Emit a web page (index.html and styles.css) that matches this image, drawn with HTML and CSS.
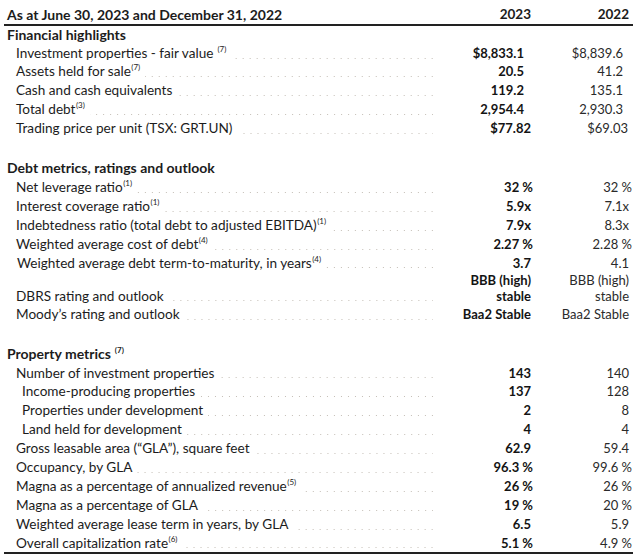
FILE: index.html
```html
<!DOCTYPE html>
<html lang="en">
<head>
<meta charset="utf-8">
<title>Highlights</title>
<link rel="stylesheet" href="styles.css">
</head>
<body>
<div class="table">
  <div class="row head">
    <div class="label"><span class="text">As at June 30, 2023 and December 31, 2022</span></div>
    <div class="val">2023</div>
    <div class="val">2022</div>
  </div>

  <div class="row section first"><div class="label"><span class="text">Financial highlights</span></div></div>
  <div class="row"><div class="label"><span class="text">Investment properties - fair value <sup>(7)</sup></span><span class="lead"></span></div><div class="val cur p7">$8,833.1</div><div class="val prev p6">$8,839.6</div></div>
  <div class="row"><div class="label"><span class="text">Assets held for sale<sup>(7)</sup></span><span class="lead"></span></div><div class="val cur p7">20.5</div><div class="val prev p6">41.2</div></div>
  <div class="row"><div class="label"><span class="text">Cash and cash equivalents</span><span class="lead"></span></div><div class="val cur p7">119.2</div><div class="val prev p6">135.1</div></div>
  <div class="row"><div class="label"><span class="text">Total debt<sup>(3)</sup></span><span class="lead"></span></div><div class="val cur p7">2,954.4</div><div class="val prev p6">2,930.3</div></div>
  <div class="row"><div class="label"><span class="text">Trading price per unit (TSX: GRT.UN)</span><span class="lead"></span></div><div class="val cur">$77.82</div><div class="val prev p1">$69.03</div></div>

  <div class="spacer"></div>

  <div class="row section"><div class="label"><span class="text">Debt metrics, ratings and outlook</span></div></div>
  <div class="row"><div class="label"><span class="text">Net leverage ratio<sup>(1)</sup></span><span class="lead"></span></div><div class="val cur pct">32 %</div><div class="val prev pct">32 %</div></div>
  <div class="row"><div class="label"><span class="text">Interest coverage ratio<sup>(1)</sup></span><span class="lead"></span></div><div class="val cur">5.9x</div><div class="val prev">7.1x</div></div>
  <div class="row"><div class="label"><span class="text">Indebtedness ratio (total debt to adjusted EBITDA)<sup>(1)</sup></span><span class="lead"></span></div><div class="val cur">7.9x</div><div class="val prev">8.3x</div></div>
  <div class="row"><div class="label"><span class="text">Weighted average cost of debt<sup>(4)</sup></span><span class="lead"></span></div><div class="val cur pct">2.27 %</div><div class="val prev pct">2.28 %</div></div>
  <div class="row"><div class="label"><span class="text shift">Weighted average debt term-to-maturity, in years<sup>(4)</sup></span><span class="lead"></span></div><div class="val cur">3.7</div><div class="val prev">4.1</div></div>
  <div class="row tall"><div class="label"><span class="text">DBRS rating and outlook</span><span class="lead"></span></div><div class="val cur two"><span class="ln">BBB (high)</span><span class="ln">stable</span></div><div class="val prev two"><span class="ln">BBB (high)</span><span class="ln">stable</span></div></div>
  <div class="row"><div class="label"><span class="text">Moody’s rating and outlook</span><span class="lead"></span></div><div class="val cur">Baa2 Stable</div><div class="val prev">Baa2 Stable</div></div>

  <div class="spacer short"></div>

  <div class="row section"><div class="label"><span class="text">Property metrics <sup>(7)</sup></span></div></div>
  <div class="row"><div class="label"><span class="text">Number of investment properties</span><span class="lead"></span></div><div class="val cur">143</div><div class="val prev">140</div></div>
  <div class="row"><div class="label sub"><span class="text">Income-producing properties</span><span class="lead"></span></div><div class="val cur">137</div><div class="val prev">128</div></div>
  <div class="row"><div class="label sub"><span class="text">Properties under development</span><span class="lead"></span></div><div class="val cur">2</div><div class="val prev">8</div></div>
  <div class="row"><div class="label sub"><span class="text">Land held for development</span><span class="lead"></span></div><div class="val cur">4</div><div class="val prev">4</div></div>
  <div class="row"><div class="label"><span class="text">Gross leasable area (“GLA”), square feet</span><span class="lead"></span></div><div class="val cur">62.9</div><div class="val prev">59.4</div></div>
  <div class="row"><div class="label"><span class="text">Occupancy, by GLA</span><span class="lead"></span></div><div class="val cur pct">96.3 %</div><div class="val prev pct">99.6 %</div></div>
  <div class="row"><div class="label"><span class="text">Magna as a percentage of annualized revenue<sup>(5)</sup></span><span class="lead"></span></div><div class="val cur pct">26 %</div><div class="val prev pct">26 %</div></div>
  <div class="row"><div class="label"><span class="text">Magna as a percentage of GLA</span><span class="lead"></span></div><div class="val cur pct">19 %</div><div class="val prev pct">20 %</div></div>
  <div class="row"><div class="label"><span class="text">Weighted average lease term in years, by GLA</span><span class="lead"></span></div><div class="val cur">6.5</div><div class="val prev">5.9</div></div>
  <div class="row last"><div class="label"><span class="text">Overall capitalization rate<sup>(6)</sup></span><span class="lead"></span></div><div class="val cur pct">5.1 %</div><div class="val prev pct">4.9 %</div></div>
</div>
</body>
</html>
```

FILE: styles.css
```css
html, body {
  margin: 0;
  padding: 0;
  background: #ffffff;
}

body {
  font-family: Lato, "Noto Sans", sans-serif;
  font-size: 13.6px;
  color: #1c1c1c;
}

.table {
  margin-left: 4px;
  padding-top: 5px;
  padding-right: 4px;
  box-sizing: border-box;
  width: 629px;
}

.row {
  display: grid;
  grid-template-columns: 429px 98px 98px;
  height: 18.9px;
  line-height: 18.9px;
}

.row.head {
  height: 19px;
  line-height: 19px;
  font-weight: 700;
  font-size: 14px;
  border-bottom: 2px solid #222;
  width: 629px;
  grid-template-columns: 429px 98px 98px 4px;
}

.row.head .val {
  font-size: 13.5px;
}

.row.section {
  font-weight: 700;
  font-size: 14px;
}

.row.section.first {
  height: 17.6px;
  line-height: 17.6px;
}

.row.last {
  border-bottom: 2px solid #222;
  width: 629px;
  grid-template-columns: 429px 98px 98px 4px;
}

.label {
  display: flex;
  padding-left: 12px;
  min-width: 0;
}

.row.head .label,
.row.section .label {
  padding-left: 3px;
}

.label.sub {
  padding-left: 18px;
}

.text {
  white-space: nowrap;
}

.text.shift {
  margin-left: 1px;
}

.lead {
  flex: 1;
  margin-left: 5px;
  background-image: linear-gradient(to right, #c4beb6 1px, transparent 1px);
  background-size: 7px 1px;
  background-repeat: repeat-x;
  background-position: right 1px bottom 4px;
}

sup {
  font-size: 8px;
  line-height: 0;
  vertical-align: 0;
  position: relative;
  top: -6px;
  margin-left: 0.5px;
}

.val {
  text-align: right;
  white-space: nowrap;
  font-size: 13px;
}

.val.cur {
  font-weight: 700;
  color: #141414;
}

.val.prev {
  font-weight: 400;
  color: #2a2a2a;
}

.val.p7 { padding-right: 7px; }
.val.p6 { padding-right: 6px; }
.val.p1 { padding-right: 1px; }

.val.cur.pct { margin-right: -2px; }
.val.prev.pct { margin-right: -3px; }

.row.tall {
  height: 33px;
  align-items: end;
}

.row.tall .label {
  height: 18.9px;
  align-self: end;
}

.val.two {
  display: flex;
  flex-direction: column;
  align-items: flex-end;
  padding-bottom: 1px;
}

.ln {
  display: block;
  line-height: 15.6px;
  height: 15.6px;
}

.spacer {
  height: 21px;
}

.spacer.short {
  height: 20.4px;
}
```
